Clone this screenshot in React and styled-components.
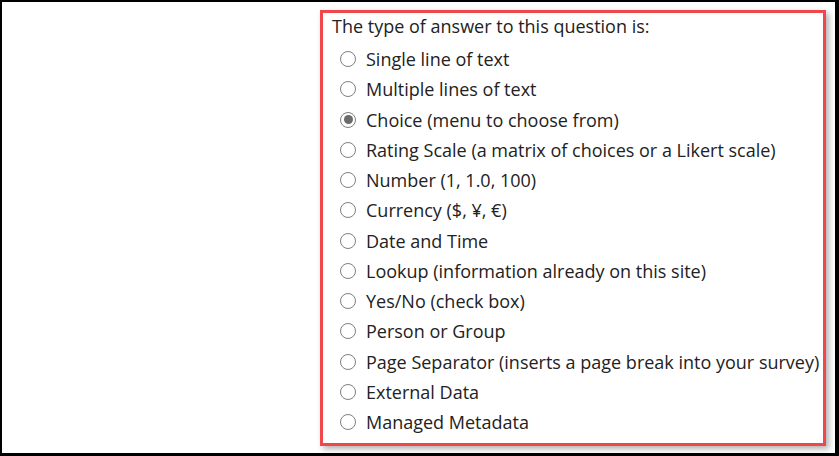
import styled, { createGlobalStyle } from 'styled-components';

const GlobalStyle = createGlobalStyle`
    html, body {
        margin: 0;
        padding: 0;
        background: #ffffff;
    }
`;

const options = [
    'Single line of text',
    'Multiple lines of text',
    'Choice (menu to choose from)',
    'Rating Scale (a matrix of choices or a Likert scale)',
    'Number (1, 1.0, 100)',
    'Currency ($, ¥, €)',
    'Date and Time',
    'Lookup (information already on this site)',
    'Yes/No (check box)',
    'Person or Group',
    'Page Separator (inserts a page break into your survey)',
    'External Data',
    'Managed Metadata',
];

function App() {
    return (
        <>
            <GlobalStyle />
            <Frame>
                <Panel>
                    <Heading>The type of answer to this question is:</Heading>
                    <List>
                        {options.map((label) => (
                            <Row key={label}>
                                <Radio checked={label.startsWith('Choice')} />
                                <Label>{label}</Label>
                            </Row>
                        ))}
                    </List>
                </Panel>
            </Frame>
        </>
    );
}

export default App;

const Frame = styled.div`
    box-sizing: border-box;
    width: 839px;
    height: 456px;
    border-top: 2px solid #000;
    border-left: 2px solid #000;
    border-right: 4px solid #000;
    border-bottom: 3px solid #000;
    background: #fff;
    padding: 8px 0 0 318px;
    overflow: hidden;
`;

const Panel = styled.div`
    box-sizing: border-box;
    width: 506px;
    height: 436px;
    border: 3px solid #f2474a;
    box-shadow: 3px 3px 6px rgba(0, 0, 0, 0.3);
    padding: 1px 0 0 9px;
    font-family: "Open Sans", "Noto Sans", sans-serif;
    color: #222;
    overflow: visible;
    white-space: nowrap;
`;

const Heading = styled.div`
    font-size: 18px;
    line-height: 24px;
    margin-bottom: 6px;
`;

const List = styled.div`
    display: flex;
    flex-direction: column;
    padding-left: 8px;
`;

const Row = styled.div`
    display: flex;
    align-items: center;
    height: 30.25px;
`;

const Radio = styled.span`
    box-sizing: border-box;
    flex: none;
    width: 16px;
    height: 16px;
    border-radius: 50%;
    border: 1.6px solid #808080;
    margin-right: 10px;
    display: flex;
    align-items: center;
    justify-content: center;

    &::after {
        content: "";
        width: 9px;
        height: 9px;
        border-radius: 50%;
        background: ${(p) => (p.checked ? '#6b6b6b' : 'transparent')};
    }
`;

const Label = styled.span`
    font-size: 18px;
    line-height: 24px;
`;
